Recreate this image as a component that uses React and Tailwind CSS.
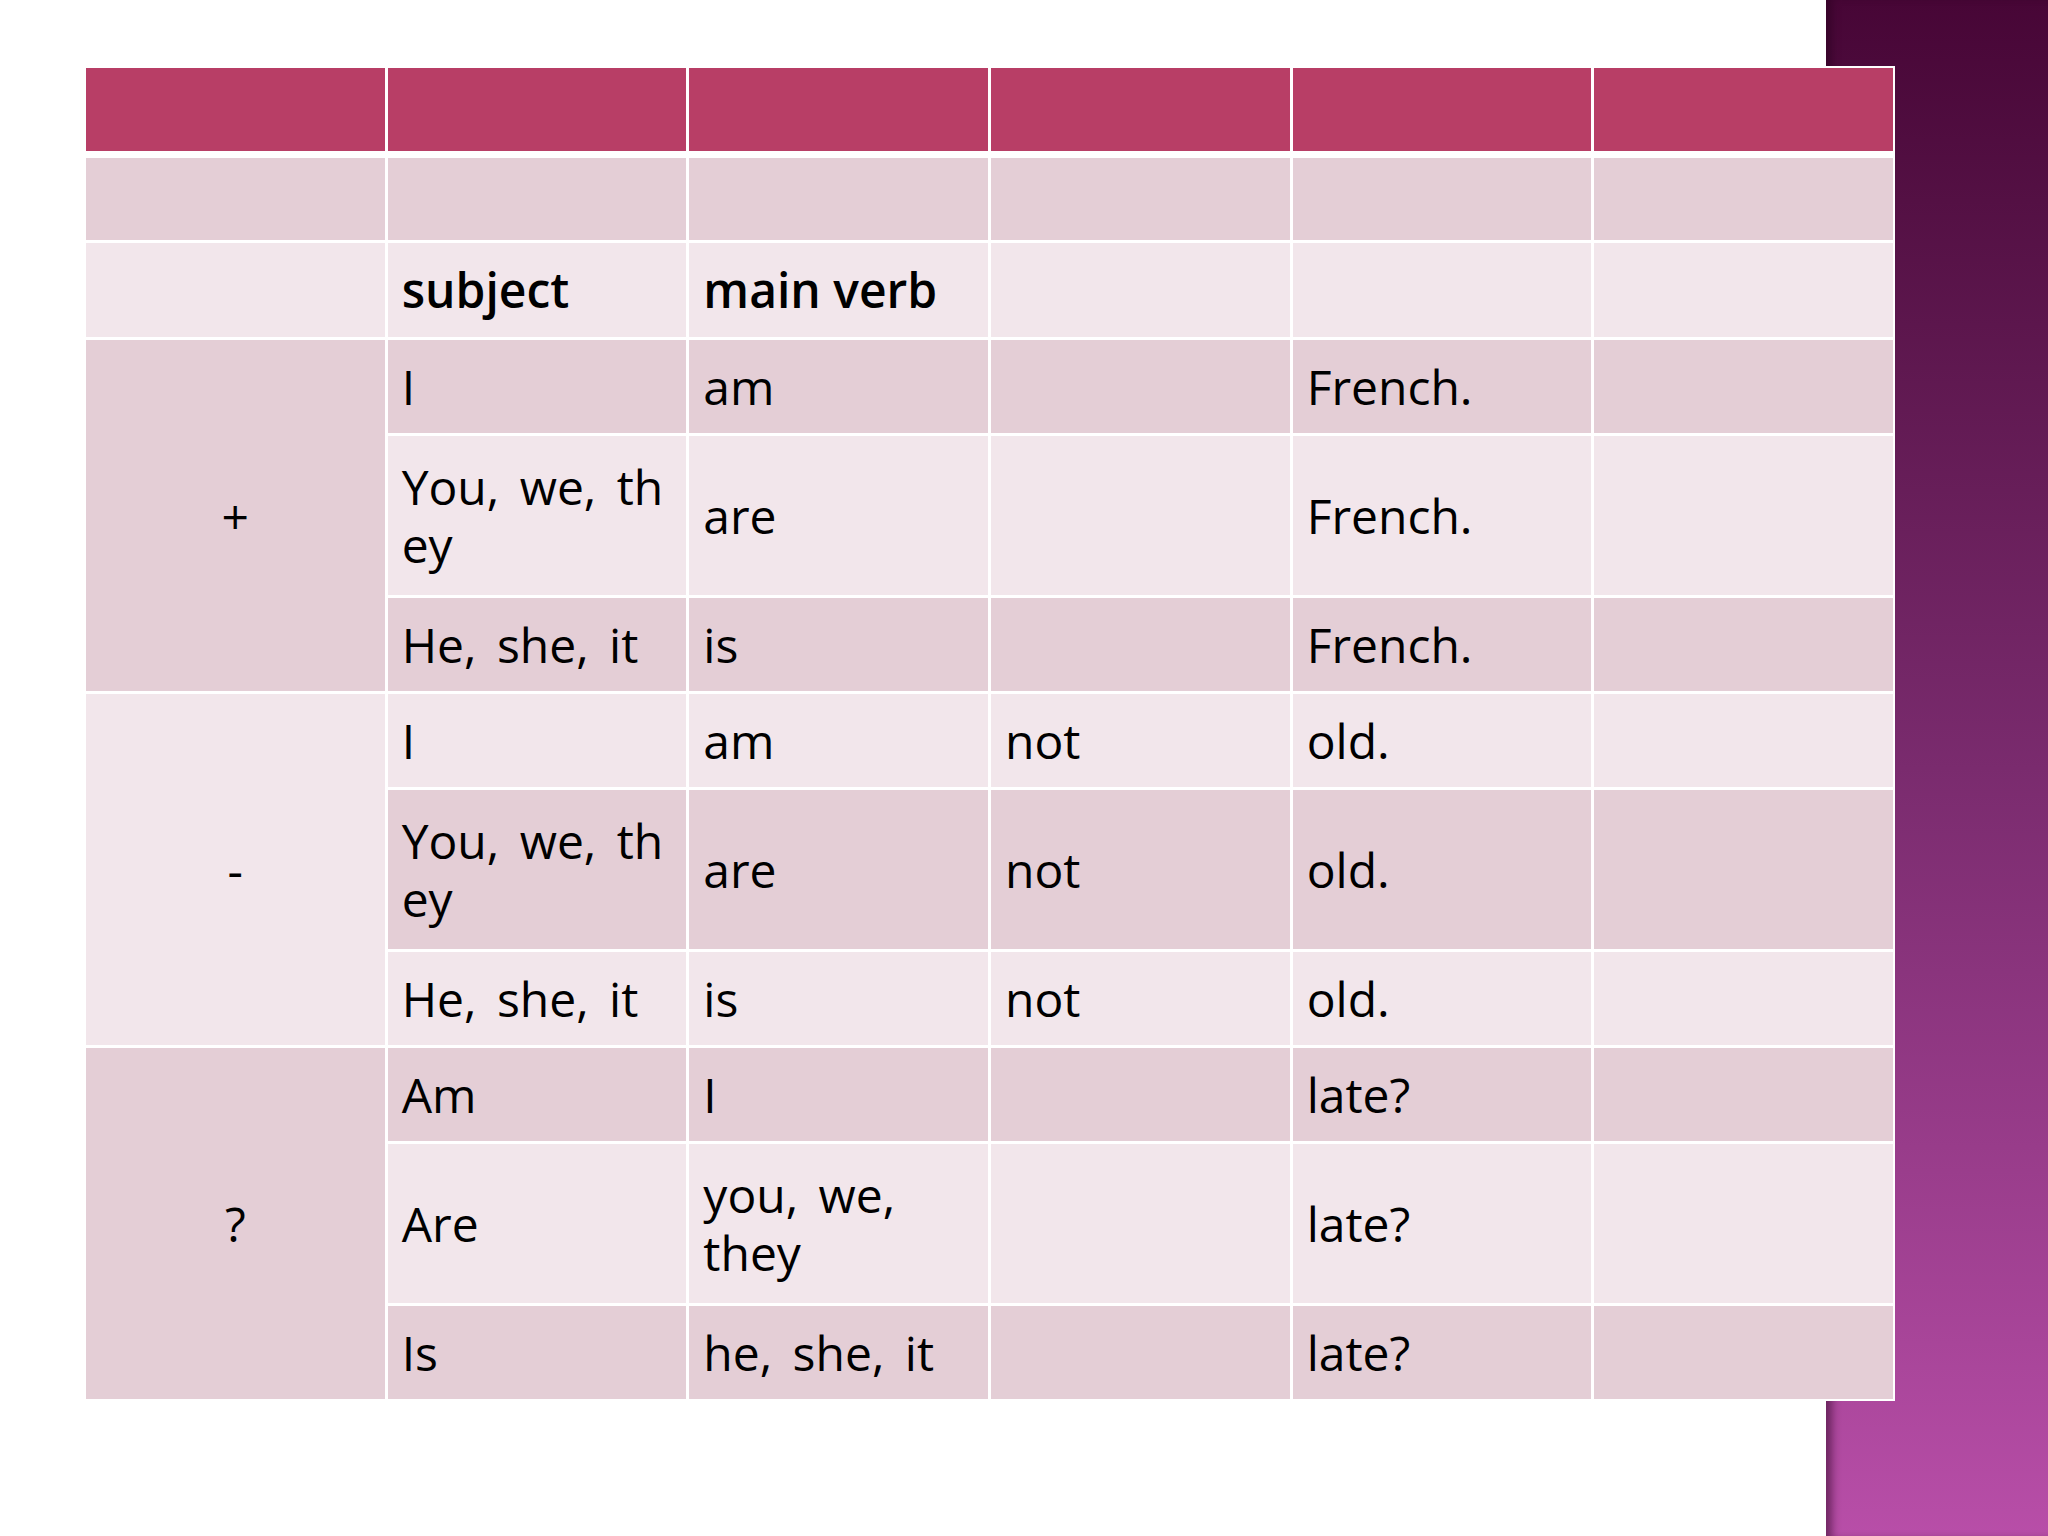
import React from "react";

const DARK = "bg-[#e4ced6]";
const LIGHT = "bg-[#f2e6eb]";

function Cell({ children, tone, bold, center, className = "" }) {
  return (
    <div
      className={`${tone === "dark" ? DARK : LIGHT} flex items-center ${
        center ? "justify-center" : "pl-[14px]"
      } ${className}`}
    >
      {children ? (
        <span
          className={
            bold
              ? "font-['Open_Sans',sans-serif] font-semibold text-[48px] leading-[1.2] text-black"
              : "font-['Open_Sans',sans-serif] text-[48px] leading-[1.2] text-black [word-spacing:8px]"
          }
        >
          {children}
        </span>
      ) : null}
    </div>
  );
}

const groups = [
  {
    sign: "+",
    tone: "dark",
    rows: [
      { tone: "dark", cells: ["I", "am", "", "French.", ""] },
      { tone: "light", cells: [<>You, we, th<br />ey</>, "are", "", "French.", ""] },
      { tone: "dark", cells: ["He, she, it", "is", "", "French.", ""] },
    ],
  },
  {
    sign: "-",
    tone: "light",
    rows: [
      { tone: "light", cells: ["I", "am", "not", "old.", ""] },
      { tone: "dark", cells: [<>You, we, th<br />ey</>, "are", "not", "old.", ""] },
      { tone: "light", cells: ["He, she, it", "is", "not", "old.", ""] },
    ],
  },
  {
    sign: "?",
    tone: "dark",
    rows: [
      { tone: "dark", cells: ["Am", "I", "", "late?", ""] },
      { tone: "light", cells: ["Are", <>you, we,<br />they</>, "", "late?", ""] },
      { tone: "dark", cells: ["Is", "he, she, it", "", "late?", ""] },
    ],
  },
];

export default function App() {
  return (
    <div className="relative w-[2048px] h-[1536px] bg-white overflow-hidden">
      <div className="absolute right-0 top-0 w-[222px] h-full bg-gradient-to-b from-[#470636] via-[#7a2b6e] to-[#b84ea8] shadow-[inset_10px_0_8px_-4px_rgba(40,0,30,0.5)]" />
      <div className="relative pt-[66px] pl-[84px]">
        <div className="w-[1811px] bg-white p-[2px] flex flex-col">
          <div className="grid grid-cols-6 gap-x-[3px] h-[83px]">
            {[0, 1, 2, 3, 4, 5].map((i) => (
              <div key={i} className="bg-[#b83e66]" />
            ))}
          </div>
          <div className="mt-[7px] grid grid-cols-6 gap-[3px] grid-rows-[82px_94px_93px_159px_93px_93px_159px_93px_93px_159px_93px]">
            {[0, 1, 2, 3, 4, 5].map((i) => (
              <Cell key={"r2" + i} tone="dark" />
            ))}
            <Cell tone="light" />
            <Cell tone="light" bold>subject</Cell>
            <Cell tone="light" bold>main verb</Cell>
            <Cell tone="light" />
            <Cell tone="light" />
            <Cell tone="light" />
            {groups.map((g, gi) => (
              <React.Fragment key={gi}>
                <Cell tone={g.tone} center className="row-span-3">
                  {g.sign}
                </Cell>
                {g.rows.map((r, ri) =>
                  r.cells.map((c, ci) => (
                    <Cell key={`${gi}-${ri}-${ci}`} tone={r.tone}>
                      {c}
                    </Cell>
                  ))
                )}
              </React.Fragment>
            ))}
          </div>
        </div>
      </div>
    </div>
  );
}
